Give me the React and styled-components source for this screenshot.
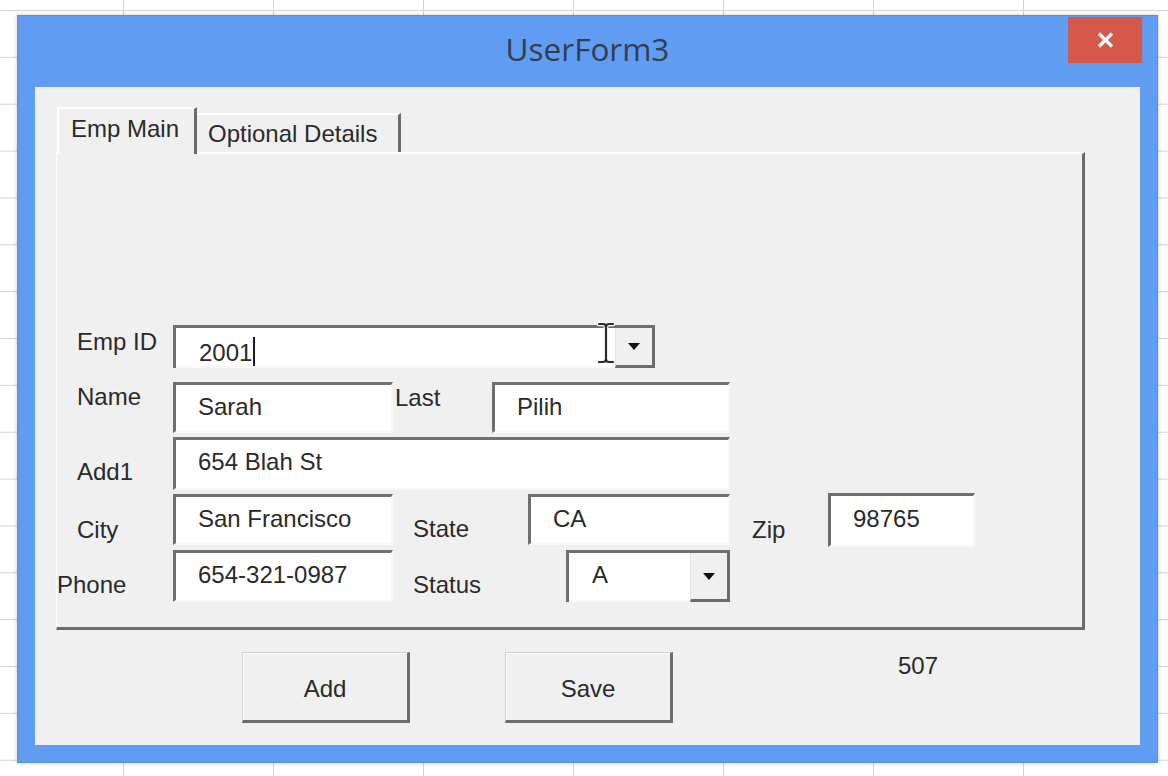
import React from "react";
import styled, { createGlobalStyle } from "styled-components";

const GlobalStyle = createGlobalStyle`
  html, body { margin: 0; padding: 0; }
  body {
    width: 1168px;
    height: 776px;
    overflow: hidden;
    background-color: #ffffff;
    background-image:
      linear-gradient(to right, #d4d4d4 1px, transparent 1px),
      linear-gradient(to bottom, #d4d4d4 1px, transparent 1px);
    background-size: 150px 100%, 100% 46.86px;
    background-position: 123px 0, 0 10px;
    font-family: "Liberation Sans", Arial, sans-serif;
  }
`;

const Desktop = styled.div`
  padding: 15px 0 0 17px;
`;

const Window = styled.div`
  width: 1141px;
  height: 748px;
  box-sizing: border-box;
  background: #609cf1;
  border: 1px solid #548fe3;
  padding: 0 17px 17px 17px;
  display: flex;
  flex-direction: column;
  box-shadow: 0 0 5px rgba(0, 0, 0, 0.18);
`;

const TitleBar = styled.div`
  height: 71px;
  display: grid;
  grid-template-columns: 1fr auto 1fr;
  align-items: start;
`;

const Title = styled.div`
  grid-column: 2;
  margin-top: 13px;
  font-family: "Open Sans", "Noto Sans", sans-serif;
  font-size: 31.5px;
  line-height: 40px;
  color: #343c52;
`;

const CloseButton = styled.div`
  grid-column: 3;
  justify-self: end;
  margin-top: 1px;
  margin-right: -2px;
  width: 74px;
  height: 46px;
  background: #d6584a;
  display: flex;
  align-items: center;
  justify-content: center;
`;

const Client = styled.div`
  width: 1105px;
  height: 658px;
  box-sizing: border-box;
  background: #f0f0f0;
  padding: 20px 55px 0 21px;
  display: flex;
  flex-direction: column;
`;

const TabStrip = styled.div`
  display: flex;
  align-items: flex-end;
  height: 45px;
  margin-left: 1px;
  position: relative;
  z-index: 1;
`;

const Tab = styled.div`
  box-sizing: border-box;
  width: ${(p) => p.$w}px;
  height: ${(p) => (p.$active ? 47 : 39)}px;
  margin-bottom: ${(p) => (p.$active ? -2 : 0)}px;
  background: #f0f0f0;
  border-top: 2px solid #ffffff;
  border-left: ${(p) => (p.$active ? "2px solid #ffffff" : "0")};
  border-right: 3px solid #6a6a6a;
  padding: ${(p) => (p.$active ? "8px 0 0 12px" : "7px 0 0 11px")};
  font-size: 24px;
  line-height: 24px;
  color: #2a2a2a;
  white-space: nowrap;
`;

const Page = styled.div`
  width: 1029px;
  height: 478px;
  box-sizing: border-box;
  border-top: 2px solid #ffffff;
  border-left: 1px solid #ffffff;
  border-right: 3px solid #6b6b6b;
  border-bottom: 3px solid #6b6b6b;
  padding-top: 171px;
  display: flex;
  flex-direction: column;
`;

const Row = styled.div`
  display: flex;
  align-items: flex-start;
  height: ${(p) => p.$h}px;
  margin-top: ${(p) => p.$mt || 0}px;
`;

const Label = styled.span`
  flex-shrink: 0;
  box-sizing: border-box;
  width: ${(p) => p.$w}px;
  margin-left: ${(p) => p.$ml || 0}px;
  padding-top: ${(p) => p.$top}px;
  font-size: 24px;
  line-height: 24px;
  color: #2a2a2a;
  white-space: nowrap;
`;

const TextBox = styled.div`
  flex-shrink: 0;
  box-sizing: border-box;
  width: ${(p) => p.$w}px;
  height: ${(p) => (p.$h ? `${p.$h}px` : "100%")};
  align-self: center;
  margin-left: ${(p) => p.$ml || 0}px;
  background: #ffffff;
  border-top: 3px solid #6f6f6f;
  border-left: 3px solid #6f6f6f;
  border-right: 2px solid #f8f8f8;
  border-bottom: 2px solid #f8f8f8;
  padding: ${(p) => (p.$h ? 11 : 10)}px 0 0 22px;
  font-size: 24px;
  line-height: 24px;
  color: #2a2a2a;
  white-space: nowrap;
`;

const Combo = styled.div`
  position: relative;
  flex-shrink: 0;
  box-sizing: border-box;
  width: ${(p) => p.$w}px;
  height: 100%;
  margin-left: ${(p) => p.$ml || 0}px;
  display: flex;
  background: #ffffff;
  border-top: 3px solid #6f6f6f;
  border-left: 3px solid #6f6f6f;
`;

const ComboText = styled.div`
  flex: 1;
  box-sizing: border-box;
  border-bottom: 2px solid #f8f8f8;
  padding: ${(p) => p.$pt}px 0 0 ${(p) => p.$pl}px;
  font-size: 24px;
  line-height: 24px;
  color: #2a2a2a;
  white-space: nowrap;
`;

const DropButton = styled.div`
  width: 40px;
  flex-shrink: 0;
  box-sizing: border-box;
  background: #f0f0f0;
  border-left: 1px solid #e2e2e2;
  border-right: 3px solid #6b6b6b;
  border-bottom: 3px solid #6b6b6b;
  display: flex;
  align-items: center;
  justify-content: center;
`;

const Arrow = styled.span`
  width: 0;
  height: 0;
  border-left: 6px solid transparent;
  border-right: 6px solid transparent;
  border-top: 7px solid #111111;
`;

const Caret = styled.span`
  display: inline-block;
  width: 2px;
  height: 29px;
  margin-left: 1px;
  background: #1e1e1e;
  vertical-align: -5px;
`;

const Pointer = styled.svg`
  position: absolute;
  left: 419px;
  top: -7px;
`;

const ButtonRow = styled.div`
  display: flex;
  align-items: flex-start;
  margin-top: 22px;
`;

const Button = styled.div`
  width: 168px;
  height: 71px;
  box-sizing: border-box;
  margin-left: ${(p) => p.$ml}px;
  background: #f0f0f0;
  border-top: 1px solid #d0d0d0;
  border-left: 1px solid #d0d0d0;
  border-right: 3px solid #6e6e6e;
  border-bottom: 3px solid #6e6e6e;
  box-shadow: inset 1px 1px 0 #ffffff;
  display: flex;
  align-items: center;
  justify-content: center;
  padding-top: 4px;
  font-size: 24px;
  line-height: 24px;
  color: #2a2a2a;
`;

const Counter = styled.span`
  margin-left: 225px;
  padding-top: 2px;
  font-size: 24px;
  line-height: 24px;
  color: #2a2a2a;
`;

const IBeam = () => (
  <Pointer width="22" height="44" viewBox="0 0 22 44">
    <g fill="none" stroke="#ffffff" strokeWidth="4.5" strokeLinecap="round">
      <path d="M4 3 H8 Q11 3 11 6 Q11 3 14 3 H18" />
      <path d="M11 6 V38" />
      <path d="M4 41 H8 Q11 41 11 38 Q11 41 14 41 H18" />
    </g>
    <g fill="none" stroke="#2a2a2a" strokeWidth="2.2" strokeLinecap="round">
      <path d="M4 3 H8 Q11 3 11 6 Q11 3 14 3 H18" />
      <path d="M11 6 V38" />
      <path d="M4 41 H8 Q11 41 11 38 Q11 41 14 41 H18" />
    </g>
  </Pointer>
);

export default function App() {
  return (
    <>
      <GlobalStyle />
      <Desktop>
        <Window>
          <TitleBar>
            <Title>UserForm3</Title>
            <CloseButton>
              <svg width="17" height="16" viewBox="0 0 17 16">
                <path d="M2 1.5 L15 14.5 M15 1.5 L2 14.5" stroke="#ffffff" strokeWidth="3.2" />
              </svg>
            </CloseButton>
          </TitleBar>
          <Client>
            <TabStrip>
              <Tab $active $w={140}>Emp Main</Tab>
              <Tab $w={204}>Optional Details</Tab>
            </TabStrip>
            <Page>
              <Row $h={43}>
                <Label $ml={20} $w={96} $top={5}>Emp ID</Label>
                <Combo $w={482}>
                  <ComboText $pt={9} $pl={23}>
                    2001
                    <Caret />
                  </ComboText>
                  <DropButton>
                    <Arrow />
                  </DropButton>
                  <IBeam />
                </Combo>
              </Row>
              <Row $h={51} $mt={14}>
                <Label $ml={20} $w={96} $top={3}>Name</Label>
                <TextBox $w={220}>Sarah</TextBox>
                <Label $ml={2} $w={97} $top={4}>Last</Label>
                <TextBox $w={238}>Pilih</TextBox>
              </Row>
              <Row $h={53} $mt={4}>
                <Label $ml={20} $w={96} $top={23}>Add1</Label>
                <TextBox $w={557}>654 Blah St</TextBox>
              </Row>
              <Row $h={51} $mt={4}>
                <Label $ml={20} $w={96} $top={24}>City</Label>
                <TextBox $w={220}>San Francisco</TextBox>
                <Label $ml={20} $w={115} $top={23}>State</Label>
                <TextBox $w={202}>CA</TextBox>
                <Label $ml={22} $w={76} $top={24}>Zip</Label>
                <TextBox $w={147} $h={54}>98765</TextBox>
              </Row>
              <Row $h={52} $mt={5}>
                <Label $w={116} $top={23}>Phone</Label>
                <TextBox $w={220}>654-321-0987</TextBox>
                <Label $ml={20} $w={153} $top={23}>Status</Label>
                <Combo $w={164}>
                  <ComboText $pt={10} $pl={23}>A</ComboText>
                  <DropButton>
                    <Arrow />
                  </DropButton>
                </Combo>
              </Row>
            </Page>
            <ButtonRow>
              <Button $ml={186}>Add</Button>
              <Button $ml={95}>Save</Button>
              <Counter>507</Counter>
            </ButtonRow>
          </Client>
        </Window>
      </Desktop>
    </>
  );
}
